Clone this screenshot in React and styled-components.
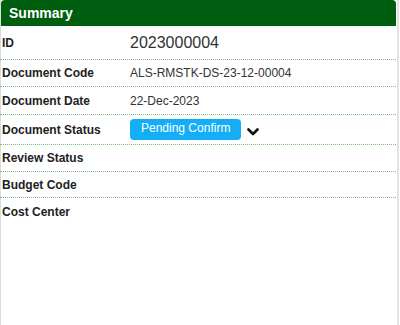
import React from "react";
import styled, { createGlobalStyle } from "styled-components";

const Global = createGlobalStyle`
  html, body { margin: 0; padding: 0; background: #fff; }
  body { font-family: "Liberation Sans", Arial, sans-serif; }
`;

const Panel = styled.div`
  width: 399px;
  height: 325px;
  box-sizing: border-box;
  border-left: 1px solid #dcdcdc;
  border-right: 2px solid #e4e4e4;
  background: #fff;
`;

const Header = styled.div`
  height: 26px;
  margin-right: 1px;
  background: #005e10;
  border-radius: 4px 4px 0 0;
  color: #fff;
  font-weight: bold;
  font-size: 14px;
  line-height: 26px;
  padding-left: 8px;
`;

const Row = styled.div`
  display: flex;
  align-items: center;
  height: ${(p) => p.$h}px;
  border-bottom: ${(p) => (p.$last ? "none" : "1px dotted #7cc07c")};
  margin-left: -1px;
  margin-right: 1px;
`;

const Label = styled.div`
  width: 128px;
  padding-left: 2px;
  flex: none;
  font-size: 12px;
  font-weight: bold;
  color: #222;
`;

const Value = styled.div`
  font-size: ${(p) => (p.$big ? 16 : 12)}px;
  color: #333;
  display: flex;
  align-items: center;
`;

const Badge = styled.span`
  display: inline-block;
  white-space: nowrap;
  background: #13aef5;
  color: #fff;
  font-size: 12px;
  height: 21px;
  line-height: 19px;
  padding: 0 11px;
  border-radius: 4px;
  box-sizing: border-box;
  text-align: center;
`;

const Chevron = styled.svg`
  margin-left: 6px;
  margin-top: 4px;
`;

const rows = [
  { label: "ID", value: "2023000004", big: true, h: 33 },
  { label: "Document Code", value: "ALS-RMSTK-DS-23-12-00004", h: 26 },
  { label: "Document Date", value: "22-Dec-2023", h: 27 },
  { label: "Document Status", badge: "Pending Confirm", h: 29 },
  { label: "Review Status", value: "", h: 26 },
  { label: "Budget Code", value: "", h: 25 },
  { label: "Cost Center", value: "", h: 27, last: true },
];

export default function App() {
  return (
    <>
      <Global />
      <Panel>
        <Header>Summary</Header>
        {rows.map((r) => (
          <Row key={r.label} $h={r.h} $last={r.last}>
            <Label>{r.label}</Label>
            <Value $big={r.big}>
              {r.badge ? (
                <>
                  <Badge>{r.badge}</Badge>
                  <Chevron width="12" height="8" viewBox="0 0 12 8">
                    <path d="M1.5 1.5 L6 6 L10.5 1.5" fill="none" stroke="#111" strokeWidth="2.6" strokeLinecap="round" strokeLinejoin="round" />
                  </Chevron>
                </>
              ) : (
                r.value
              )}
            </Value>
          </Row>
        ))}
      </Panel>
    </>
  );
}
